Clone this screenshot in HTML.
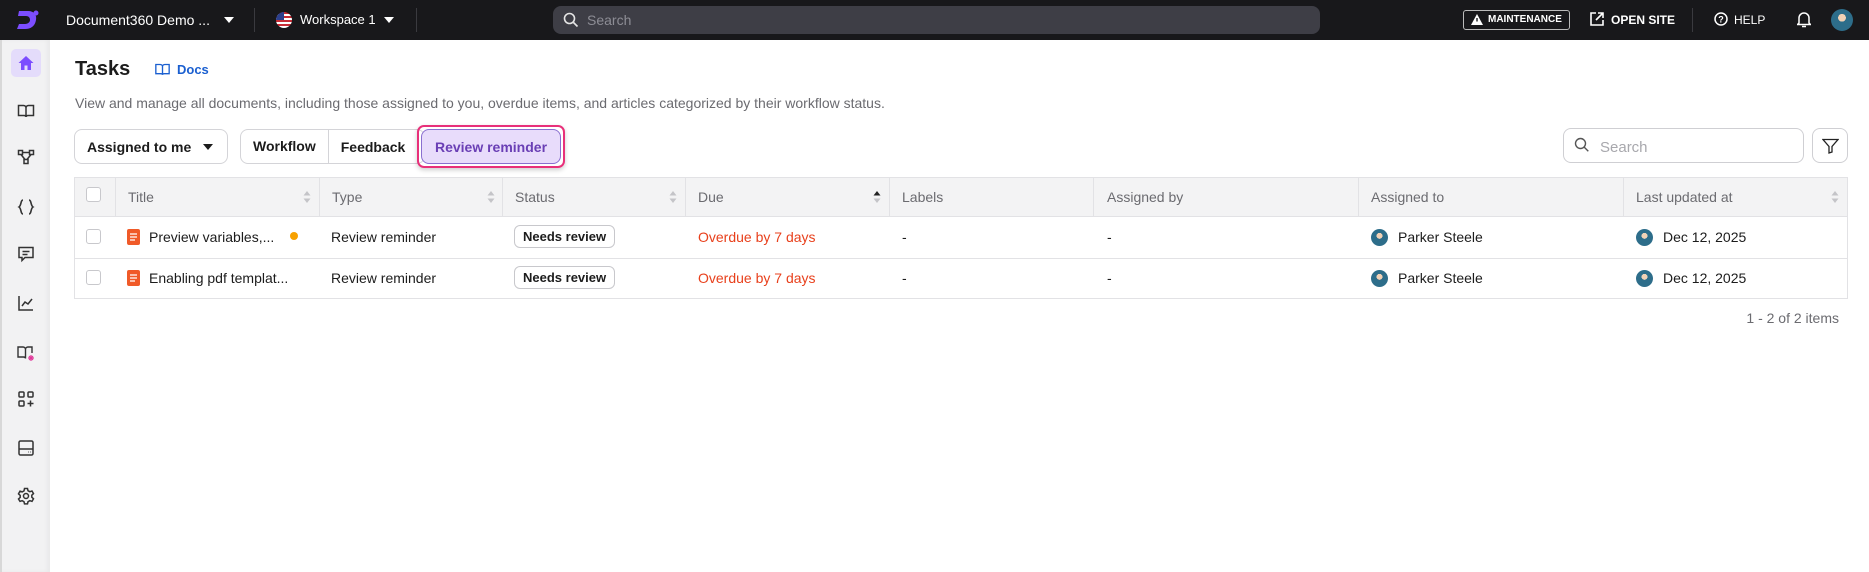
<!DOCTYPE html>
<html><head><meta charset="utf-8"><style>
*{box-sizing:border-box;margin:0;padding:0}
body{width:1869px;height:572px;overflow:hidden;background:#fff;font-family:"Liberation Sans",sans-serif;color:#1c1c1c;position:relative}
.a{position:absolute}
.top{left:0;top:0;width:1869px;height:40px;background:#18181b}
.wt{color:#fff;font-size:14px}
.side{left:0;top:40px;width:50px;height:532px;background:#f2f2f3;border-left:2px solid #d8d8d8;box-shadow:inset -3px 0 4px rgba(0,0,0,.04)}
.ic{left:17px;width:18px;height:18px}
.btn{border:1px solid #d4d4d8;border-radius:8px;background:#fff;font-size:14px;font-weight:bold;display:flex;align-items:center}
.th{top:177px;height:40px;font-size:14px;color:#6b6b70;line-height:40px}
.td{font-size:14px;line-height:41px}
.cb{width:15px;height:15px;border:1px solid #c8c8cc;border-radius:3px;background:#fff}
.pill{border:1px solid #c8c8cc;border-radius:6px;font-size:13px;font-weight:bold;padding:0 8px;height:23px;line-height:21px}
.av{width:17px;height:17px;border-radius:50%;background:radial-gradient(circle at 50% 40%,#f2d2b6 0 22%,#2d6d8a 23% 100%)}
.sort{width:8px;height:12px}
</style></head><body>
<div class="a top"></div>
<svg class="a" style="left:15px;top:8px" width="26" height="24" viewBox="0 0 26 24"><path d="M4 3h9c6 0 9 4 8 9-1 6-5 9-11 9H2l2-5h6c3 0 5-2 5-4s-1-4-4-4H3z" fill="#7c4dff"/><circle cx="21" cy="5" r="2.5" fill="#7c4dff"/></svg>
<div class="a wt" style="left:66px;top:12px">Document360 Demo ...</div>
<svg class="a" style="left:224px;top:17px" width="10" height="6"><path d="M0 0h10L5 6z" fill="#fff"/></svg>
<div class="a" style="left:254px;top:8px;width:1px;height:24px;background:#3a3a3f"></div>
<div class="a" style="left:276px;top:12px;width:16px;height:16px;border-radius:50%;background:repeating-linear-gradient(#c62b35 0 2px,#fff 2px 4px);overflow:hidden"><div style="width:8px;height:8px;background:#2b3f8c"></div></div>
<div class="a wt" style="left:300px;top:12px;font-size:13px">Workspace 1</div>
<svg class="a" style="left:384px;top:17px" width="10" height="6"><path d="M0 0h10L5 6z" fill="#fff"/></svg>
<div class="a" style="left:416px;top:8px;width:1px;height:24px;background:#3a3a3f"></div>
<div class="a" style="left:553px;top:6px;width:767px;height:28px;background:#3e3e46;border-radius:8px"></div>
<svg class="a" style="left:563px;top:12px" width="16" height="16" viewBox="0 0 16 16"><circle cx="6.5" cy="6.5" r="5" stroke="#e6e6e6" stroke-width="1.6" fill="none"/><path d="M10.5 10.5l4 4" stroke="#e6e6e6" stroke-width="1.6"/></svg>
<div class="a" style="left:587px;top:12px;color:#8d8d95;font-size:14px">Search</div>
<div class="a" style="left:1463px;top:10px;width:107px;height:20px;border:1px solid #bbb;border-radius:3px;color:#fff;font-size:10px;font-weight:bold;line-height:18px;padding-left:24px">MAINTENANCE</div>
<svg class="a" style="left:1471px;top:14px" width="12" height="11"><path d="M6 0L12 11H0z" fill="#fff"/><path d="M6 4v3.5" stroke="#18181b" stroke-width="1.4"/></svg>
<svg class="a" style="left:1590px;top:12px" width="14" height="14" viewBox="0 0 14 14"><path d="M6 1H1v12h12V8M8 1h5v5M13 1L6 8" stroke="#fff" stroke-width="1.6" fill="none"/></svg>
<div class="a wt" style="left:1611px;top:13px;font-size:12px;font-weight:bold">OPEN SITE</div>
<div class="a" style="left:1692px;top:8px;width:1px;height:24px;background:#3a3a3f"></div>
<svg class="a" style="left:1714px;top:12px" width="14" height="14"><circle cx="7" cy="7" r="6" stroke="#fff" stroke-width="1.5" fill="none"/><text x="7" y="10.5" fill="#fff" font-size="9" font-weight="bold" text-anchor="middle" font-family="Liberation Sans">?</text></svg>
<div class="a wt" style="left:1734px;top:13px;font-size:12px">HELP</div>
<svg class="a" style="left:1797px;top:11px" width="14" height="17" viewBox="0 0 14 17"><path d="M2 12V7a5 5 0 0110 0v5l1.5 1.5h-13z" stroke="#fff" stroke-width="1.5" fill="none"/><path d="M5 15.5h4" stroke="#fff" stroke-width="1.5"/></svg>
<div class="a av" style="left:1831px;top:9px;width:22px;height:22px"></div>

<div class="a side"></div>
<div class="a" style="left:11px;top:49px;width:30px;height:28px;background:#e4dcfb;border-radius:5px"></div>
<svg class="a ic" style="top:54px" viewBox="0 0 18 18"><path d="M9 2L1.5 9H4v7h3.5v-4.5h3V16H14V9h2.5z" fill="#7c4dff"/></svg>
<svg class="a ic" style="top:102px" viewBox="0 0 18 18" fill="none" stroke="#333" stroke-width="1.5"><path d="M1.5 3.5h5c1.5 0 2.5 1 2.5 2.5v9c0-1-1-1.5-2-1.5H1.5zM16.5 3.5h-5C10 3.5 9 4.5 9 6v9c0-1 1-1.5 2-1.5h5.5z"/></svg>
<svg class="a ic" style="top:148px" viewBox="0 0 18 18" fill="none" stroke="#333" stroke-width="1.5"><rect x="1.5" y="2.5" width="4" height="4"/><rect x="12.5" y="2.5" width="4" height="4"/><rect x="7" y="11.5" width="4" height="4"/><path d="M5.5 4.5h7M4 6.5l4 5M14 6.5l-4 5"/></svg>
<svg class="a ic" style="top:198px" viewBox="0 0 18 18" fill="none" stroke="#333" stroke-width="1.6"><path d="M6 2C3.5 2 4.5 7.5 2 9c2.5 1.5 1.5 7 4 7M12 2c2.5 0 1.5 5.5 4 7-2.5 1.5-1.5 7-4 7"/></svg>
<svg class="a ic" style="top:245px" viewBox="0 0 18 18" fill="none" stroke="#333" stroke-width="1.5"><path d="M2 2.5h14v10H8l-3 3v-3H2z"/><path d="M5.5 6.5h7M5.5 9.5h5"/></svg>
<svg class="a ic" style="top:294px" viewBox="0 0 18 18" fill="none" stroke="#333" stroke-width="1.5"><path d="M2 2v14h14M5 12l3-4 3 2 4-5"/></svg>
<svg class="a ic" style="top:344px" viewBox="0 0 18 18" fill="none" stroke="#333" stroke-width="1.4"><path d="M1 3h5c1.5 0 2.5 1 2.5 2.5v9c0-1-1-1.5-2-1.5H1zM8.5 5.5c0-1.5 1-2.5 2.5-2.5h4v6"/><path d="M14 11v6M11 14h6M12 12l4 4M16 12l-4 4" stroke="#e0399a" stroke-width="1.2"/></svg>
<svg class="a ic" style="top:390px" viewBox="0 0 18 18" fill="none" stroke="#333" stroke-width="1.5"><rect x="2" y="2" width="5" height="5" rx="1"/><rect x="11" y="2" width="5" height="5" rx="1"/><rect x="2" y="11" width="5" height="5" rx="1"/><path d="M13.5 10.5v6M10.5 13.5h6"/></svg>
<svg class="a ic" style="top:439px" viewBox="0 0 18 18" fill="none" stroke="#333" stroke-width="1.5"><rect x="2" y="2" width="14" height="14" rx="1.5"/><path d="M2 10h14M11 13h.5M13.5 13h.5"/></svg>
<svg class="a ic" style="top:487px" viewBox="0 0 18 18" fill="none" stroke="#333" stroke-width="1.5"><circle cx="9" cy="9" r="2.5"/><path d="M7.5 1.5h3l.5 2.2 1.8 1 2.2-.7 1.5 2.6-1.7 1.6v2l1.7 1.6-1.5 2.6-2.2-.7-1.8 1-.5 2.2h-3l-.5-2.2-1.8-1-2.2.7L1.5 12l1.7-1.6v-2L1.5 6.8 3 4.2l2.2.7 1.8-1z"/></svg>

<div class="a" style="left:75px;top:58px;font-size:20px;font-weight:bold">Tasks</div>
<svg class="a" style="left:155px;top:63px" width="15" height="13" viewBox="0 0 18 15" fill="none" stroke="#1a5fd0" stroke-width="1.6"><path d="M1 1.5h5c1.5 0 3 1 3 2.5v10c0-1-1-1.5-2-1.5H1zM17 1.5h-5C10.5 1.5 9 2.5 9 4v10c0-1 1-1.5 2-1.5h6z"/></svg>
<div class="a" style="left:177px;top:62px;font-size:13px;font-weight:bold;color:#1a5fd0">Docs</div>
<div class="a" style="left:75px;top:95px;font-size:14px;color:#6b6b70">View and manage all documents, including those assigned to you, overdue items, and articles categorized by their workflow status.</div>

<div class="a btn" style="left:74px;top:129px;width:154px;height:35px;padding-left:12px">Assigned to me<svg style="margin-left:12px" width="10" height="6"><path d="M0 0h10L5 6z" fill="#1c1c1c"/></svg></div>
<div class="a btn" style="left:240px;top:129px;width:185px;height:35px"><span style="padding:0 12px;border-right:1px solid #d4d4d8;line-height:33px">Workflow</span><span style="padding:0 12px">Feedback</span></div>
<div class="a" style="left:417px;top:125px;width:148px;height:43px;border:2px solid #e8307a;border-radius:7px;box-shadow:0 2px 5px rgba(0,0,0,.2)"></div>
<div class="a btn" style="left:421px;top:129px;width:140px;height:35px;background:#e8dcfb;border-color:#8a6fd0;color:#6a3fb5;justify-content:center">Review reminder</div>
<div class="a" style="left:1563px;top:128px;width:241px;height:35px;border:1px solid #cfcfd3;border-radius:8px"></div>
<svg class="a" style="left:1574px;top:137px" width="16" height="16" viewBox="0 0 16 16"><circle cx="6.5" cy="6.5" r="5" stroke="#555" stroke-width="1.4" fill="none"/><path d="M10.3 10.3l4 4" stroke="#555" stroke-width="1.4"/></svg>
<div class="a" style="left:1600px;top:139px;font-size:15px;color:#a8a8ad">Search</div>
<div class="a" style="left:1812px;top:128px;width:36px;height:35px;border:1px solid #cfcfd3;border-radius:8px"></div>
<svg class="a" style="left:1822px;top:138px" width="17" height="16" viewBox="0 0 17 16"><path d="M1 1.5h15l-6 7v5.5l-3 1V8.5z" stroke="#222" stroke-width="1.3" fill="none"/></svg>

<div class="a" style="left:74px;top:177px;width:1774px;height:122px;border:1px solid #e2e2e5"></div>
<div class="a" style="left:75px;top:178px;width:1772px;height:39px;background:#f3f3f4;border-bottom:1px solid #e2e2e5"></div>
<div class="a" style="left:75px;top:258px;width:1772px;height:1px;background:#e2e2e5"></div>
<div class="a" style="left:115px;top:178px;width:1px;height:39px;background:#e2e2e5"></div>
<div class="a" style="left:319px;top:178px;width:1px;height:39px;background:#e2e2e5"></div>
<div class="a" style="left:502px;top:178px;width:1px;height:39px;background:#e2e2e5"></div>
<div class="a" style="left:685px;top:178px;width:1px;height:39px;background:#e2e2e5"></div>
<div class="a" style="left:889px;top:178px;width:1px;height:39px;background:#e2e2e5"></div>
<div class="a" style="left:1093px;top:178px;width:1px;height:39px;background:#e2e2e5"></div>
<div class="a" style="left:1358px;top:178px;width:1px;height:39px;background:#e2e2e5"></div>
<div class="a" style="left:1623px;top:178px;width:1px;height:39px;background:#e2e2e5"></div>
<div class="a cb" style="left:86px;top:187px"></div>
<div class="a th" style="left:128px">Title</div><svg class="a sort" style="left:303px;top:191px"><path d="M4 0l3.5 4.5h-7zM4 12L.5 7.5h7z" fill="#c4c4c8"/></svg>
<div class="a th" style="left:332px">Type</div><svg class="a sort" style="left:487px;top:191px"><path d="M4 0l3.5 4.5h-7zM4 12L.5 7.5h7z" fill="#c4c4c8"/></svg>
<div class="a th" style="left:515px">Status</div><svg class="a sort" style="left:669px;top:191px"><path d="M4 0l3.5 4.5h-7zM4 12L.5 7.5h7z" fill="#c4c4c8"/></svg>
<div class="a th" style="left:698px">Due</div><svg class="a sort" style="left:873px;top:191px"><path d="M4 0l3.5 4.5h-7z" fill="#222"/><path d="M4 12L.5 7.5h7z" fill="#c4c4c8"/></svg>
<div class="a th" style="left:902px">Labels</div>
<div class="a th" style="left:1107px">Assigned by</div>
<div class="a th" style="left:1371px">Assigned to</div>
<div class="a th" style="left:1636px">Last updated at</div><svg class="a sort" style="left:1831px;top:191px"><path d="M4 0l3.5 4.5h-7zM4 12L.5 7.5h7z" fill="#c4c4c8"/></svg>

<div class="a cb" style="left:86px;top:229px"></div>
<svg class="a" style="left:127px;top:229px" width="13" height="16"><rect width="13" height="16" rx="2" fill="#f05a28"/><path d="M3 5h7M3 8h7M3 11h5" stroke="#fff" stroke-width="1.3"/></svg>
<div class="a td" style="left:149px;top:217px">Preview variables,...</div>
<div class="a" style="left:290px;top:232px;width:8px;height:8px;border-radius:50%;background:#f7a100"></div>
<div class="a td" style="left:331px;top:217px">Review reminder</div>
<div class="a pill" style="left:514px;top:225px">Needs review</div>
<div class="a td" style="left:698px;top:217px;color:#e8401c">Overdue by 7 days</div>
<div class="a td" style="left:902px;top:217px">-</div>
<div class="a td" style="left:1107px;top:217px">-</div>
<div class="a av" style="left:1371px;top:229px"></div><div class="a td" style="left:1398px;top:217px">Parker Steele</div>
<div class="a av" style="left:1636px;top:229px"></div><div class="a td" style="left:1663px;top:217px">Dec 12, 2025</div>

<div class="a cb" style="left:86px;top:270px"></div>
<svg class="a" style="left:127px;top:270px" width="13" height="16"><rect width="13" height="16" rx="2" fill="#f05a28"/><path d="M3 5h7M3 8h7M3 11h5" stroke="#fff" stroke-width="1.3"/></svg>
<div class="a td" style="left:149px;top:258px">Enabling pdf templat...</div>
<div class="a td" style="left:331px;top:258px">Review reminder</div>
<div class="a pill" style="left:514px;top:266px">Needs review</div>
<div class="a td" style="left:698px;top:258px;color:#e8401c">Overdue by 7 days</div>
<div class="a td" style="left:902px;top:258px">-</div>
<div class="a td" style="left:1107px;top:258px">-</div>
<div class="a av" style="left:1371px;top:270px"></div><div class="a td" style="left:1398px;top:258px">Parker Steele</div>
<div class="a av" style="left:1636px;top:270px"></div><div class="a td" style="left:1663px;top:258px">Dec 12, 2025</div>

<div class="a" style="left:1700px;top:310px;width:139px;text-align:right;font-size:14px;color:#6b6b70">1 - 2 of 2 items</div>
</body></html>
